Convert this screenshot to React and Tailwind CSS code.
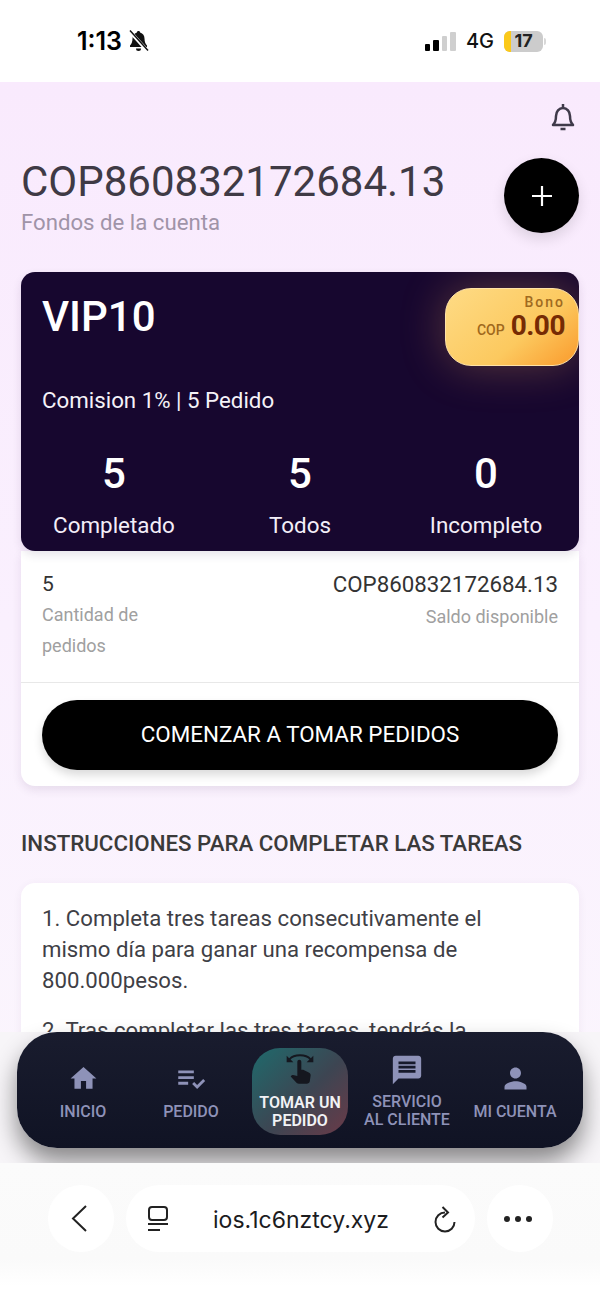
import { MdHome, MdPlaylistAddCheck, MdSwipe, MdMessage, MdPerson } from "react-icons/md";

function StatusBar() {
  return (
    <div className="h-[82px] bg-white flex items-center justify-between pl-[77px] pr-[54px] shrink-0 font-['Inter',sans-serif]">
      <div className="flex items-center gap-[6px] text-black">
        <span className="text-[25px] font-semibold leading-none">1:13</span>
        <svg width="21" height="22" viewBox="0 0 21 22" fill="#111">
          <path d="M10.500 1c-1 0-1.600.7-1.600 1.600C6 3.400 4.500 5.800 4.500 8.500c0 3.500-1 5.500-2.500 7V17h17v-1.500c-1.500-1.500-2.500-3.500-2.500-7 0-2.700-1.500-5.100-4.400-5.900C12.100 1.700 11.500 1 10.500 1z" />
          <path d="M8 18.500a2.500 2.500 0 0 0 5 0z" />
          <path d="M1.500 1l18 20" stroke="#fff" strokeWidth="3.500" />
          <path d="M2 .5l18 20" stroke="#111" strokeWidth="1.500" />
        </svg>
      </div>
      <div className="flex items-center">
        <div className="flex items-end gap-[3px] h-[19px] mr-[10px]">
          <div className="w-[5px] h-[7px] rounded-[1px] bg-black"></div>
          <div className="w-[6px] h-[11px] rounded-[1px] bg-black"></div>
          <div className="w-[5px] h-[15px] rounded-[1px] bg-[#cfcfcf]"></div>
          <div className="w-[6px] h-[19px] rounded-[1px] bg-[#cfcfcf]"></div>
        </div>
        <span className="text-[20px] font-medium text-[#111] mr-[10px]">4G</span>
        <div className="relative w-[39px] h-[21px] rounded-[6px] bg-[#cccccc] overflow-hidden flex items-center justify-center">
          <div className="absolute left-0 top-0 bottom-0 w-[7px] bg-[#fbc91a]"></div>
          <span className="relative text-[18px] font-bold leading-none text-[#222]">17</span>
        </div>
        <div className="w-[2px] h-[7px] ml-[1px] rounded-r-full bg-[#d8d8d8]"></div>
      </div>
    </div>
  );
}

function Stat({ value, label }) {
  return (
    <div className="flex flex-col items-center">
      <span className="text-[42px] leading-[47px] font-medium text-white">{value}</span>
      <span className="text-[22.400px] leading-[25px] mt-[16px] text-[#f3eef8]">{label}</span>
    </div>
  );
}

function VipCard() {
  return (
    <div className="relative mt-[36px] h-[279px] rounded-[14px] bg-[#17072f] overflow-hidden shadow-[0_4px_10px_rgba(60,30,80,0.12)]">
      <div className="px-[21px] pt-[17px]">
        <div className="text-[42px] leading-[56px] font-medium text-white">VIP10</div>
        <div className="mt-[41px] text-[22.300px] leading-[28px] text-[#f5f2f8]">Comision 1% | 5 Pedido</div>
      </div>
      <div className="grid grid-cols-3 mt-[36px]">
        <Stat value="5" label="Completado" />
        <Stat value="5" label="Todos" />
        <Stat value="0" label="Incompleto" />
      </div>
      <div className="absolute right-0 top-[16px] w-[134px] h-[78px] rounded-[26px] border border-[#ffe2a6] bg-[linear-gradient(140deg,#fedb85_0%,#fcc95f_60%,#fa9a2c_100%)] shadow-[0_0_45px_rgba(250,170,90,0.3)] flex flex-col items-end pr-[13px] pt-[3px]">
        <span className="text-[14px] leading-[20px] font-medium tracking-[2px] text-[#a06a20]">Bono</span>
        <div className="flex items-baseline gap-[6px] leading-none">
          <span className="text-[14px] font-medium text-[#a0681c]">COP</span>
          <span className="text-[28px] font-bold tracking-[-0.5px] text-[#762b04]">0.00</span>
        </div>
      </div>
    </div>
  );
}

function OrdersCard() {
  return (
    <div className="bg-white rounded-b-[14px] shadow-[0_4px_10px_rgba(60,30,80,0.1)]">
      <div className="flex justify-between px-[21px] pt-[18px] h-[132px] border-b border-[#e8e8e8]">
        <div>
          <div className="text-[21px] leading-[30px] text-[#333]">5</div>
          <div className="w-[110px] text-[18px] leading-[31px] text-[#a0a0a0]">Cantidad de pedidos</div>
        </div>
        <div className="text-right">
          <div className="text-[22.300px] leading-[30px] text-[#333]">COP860832172684.13</div>
          <div className="text-[18px] leading-[31px] mt-[2px] text-[#a0a0a0]">Saldo disponible</div>
        </div>
      </div>
      <div className="px-[21px] pt-[17px] pb-[16px]">
        <button className="w-full h-[70px] rounded-full bg-black text-white text-[22.400px] shadow-[0_5px_10px_rgba(0,0,0,0.15)]">COMENZAR A TOMAR PEDIDOS</button>
      </div>
    </div>
  );
}

function NavItem({ icon, lines }) {
  return (
    <div className="w-[108px] flex flex-col items-center">
      <div className="h-[34px] flex items-center justify-center">{icon}</div>
      <div className="mt-[7px] text-center text-[16px] leading-[18px] font-medium text-[#8e92b8]">
        {lines.map((l) => <div key={l}>{l}</div>)}
      </div>
    </div>
  );
}

function BottomNav() {
  return (
    <div className="absolute left-0 right-0 bottom-0 h-[131px] bg-[#f7f5f8]">
      <div className="absolute left-[17px] right-[17px] top-0 h-[116px] rounded-[40px] bg-[linear-gradient(180deg,#191c2e_0%,#101324_100%)] shadow-[0_14px_24px_rgba(0,0,0,0.45)] flex items-center pl-[12px] pr-[13px]">
        <div className="flex w-full items-center mt-[2px]">
          <NavItem icon={<MdHome size={31} color="#8e92b8" />} lines={["INICIO"]} />
          <NavItem icon={<MdPlaylistAddCheck size={34} color="#8e92b8" />} lines={["PEDIDO"]} />
          <div className="w-[108px] flex justify-center">
            <div className="w-[96px] h-[87px] ml-[2px] rounded-[28px] bg-[linear-gradient(135deg,#1f6a6c_0%,#3d4552_55%,#6a3a48_100%)] flex flex-col items-center">
              <MdSwipe size={32} color="#15171f" className="mt-[5px]" />
              <div className="text-center text-[16px] leading-[18px] font-semibold text-[#f2f2f5] mt-[9px]">
                <div>TOMAR UN</div>
                <div>PEDIDO</div>
              </div>
            </div>
          </div>
          <div className="w-[108px] flex flex-col items-center">
            <MdMessage size={34} color="#8e92b8" />
            <div className="mt-[6px] text-center text-[16px] leading-[18px] font-medium text-[#8e92b8]">
              <div>SERVICIO</div>
              <div>AL CLIENTE</div>
            </div>
          </div>
          <NavItem icon={<MdPerson size={33} color="#8e92b8" />} lines={["MI CUENTA"]} />
        </div>
      </div>
    </div>
  );
}

function BrowserBar() {
  return (
    <div className="h-[137px] bg-[linear-gradient(180deg,#fbfbfb_0%,#fafafa_70%,#ffffff_90%)] shrink-0 flex justify-center gap-[12px] pt-[22px] font-['Inter',sans-serif]">
      <div className="w-[66px] h-[67px] rounded-full bg-white flex items-center justify-center">
        <svg width="16" height="27" viewBox="0 0 16 27" fill="none" stroke="#222" strokeWidth="2" className="mr-[4px]">
          <path d="M15 1L2 13.500 15 26" />
        </svg>
      </div>
      <div className="w-[349px] h-[67px] rounded-full bg-white flex items-center pl-[20px] pr-[18px]">
        <svg width="24" height="28" viewBox="0 0 24 28" fill="none" stroke="#222" strokeWidth="2">
          <rect x="3" y="2" width="18" height="13" rx="3" />
          <path d="M2 19h20M2 25h12" />
        </svg>
        <span className="flex-1 text-center text-[23px] mt-[3px] text-[#1c1c1e]">ios.1c6nztcy.xyz</span>
        <svg width="24" height="28" viewBox="0 0 24 28" fill="none" stroke="#222" strokeWidth="2">
          <path d="M12 7.500A9.500 9.500 0 1 0 21.500 17" />
          <path d="M9.500 2l5.500 5.500-5.500 5" />
        </svg>
      </div>
      <div className="w-[66px] h-[67px] rounded-full bg-white flex items-center justify-center gap-[5px] pr-[4px]">
        <div className="w-[6px] h-[6px] rounded-full bg-[#222]"></div>
        <div className="w-[6px] h-[6px] rounded-full bg-[#222]"></div>
        <div className="w-[6px] h-[6px] rounded-full bg-[#222]"></div>
      </div>
    </div>
  );
}

export default function App() {
  return (
    <div className="w-[600px] h-[1300px] flex flex-col overflow-hidden font-['Roboto',sans-serif]">
      <StatusBar />
      <div className="relative flex-1 overflow-hidden bg-[linear-gradient(180deg,#f9eafd_0%,#faf0fe_50%,#fbf6fd_100%)]">
        <div className="px-[21px] pt-[20px]">
          <div className="flex justify-end pr-[4px]">
            <svg width="24" height="30" viewBox="0 0 24 30" fill="none" stroke="#3f3a4a" strokeWidth="2.500">
              <path d="M2 23c2-2 3-3.500 3-9 0-4.500 3-8 7-8s7 3.500 7 8c0 5.500 1 7 3 9z" strokeLinejoin="round" />
              <path d="M12 2v3" />
              <path d="M9.500 27h5" />
            </svg>
          </div>
          <div className="flex justify-between mt-[24px]">
            <div>
              <div className="text-[42px] leading-[52px] text-[#3f3a45]">COP860832172684.13</div>
              <div className="text-[22.200px] leading-[28px] text-[#a094a8]">Fondos de la cuenta</div>
            </div>
            <div className="w-[75px] h-[75px] mt-[2px] rounded-full bg-black shadow-[0_6px_14px_rgba(0,0,0,0.12)] flex items-center justify-center">
              <svg width="20" height="20" viewBox="0 0 20 20" stroke="#fff" strokeWidth="2.200">
                <path d="M10 0v20M0 10h20" />
              </svg>
            </div>
          </div>
          <VipCard />
          <OrdersCard />
          <div className="mt-[43px] text-[22.300px] leading-[28px] font-medium text-[#3a3a3a]">INSTRUCCIONES PARA COMPLETAR LAS TAREAS</div>
          <div className="mt-[26px] bg-white rounded-[14px] pl-[21px] pr-[60px] pt-[20px] text-[22.200px] leading-[31px] text-[#3f3f46] h-[300px] shadow-[0_2px_10px_rgba(60,30,80,0.06)]">
            <p>1. Completa tres tareas consecutivamente el mismo día para ganar una recompensa de 800.000pesos.</p>
            <p className="mt-[19px] whitespace-nowrap">2. Tras completar las tres tareas, tendrás la</p>
          </div>
        </div>
        <BottomNav />
      </div>
      <BrowserBar />
    </div>
  );
}
